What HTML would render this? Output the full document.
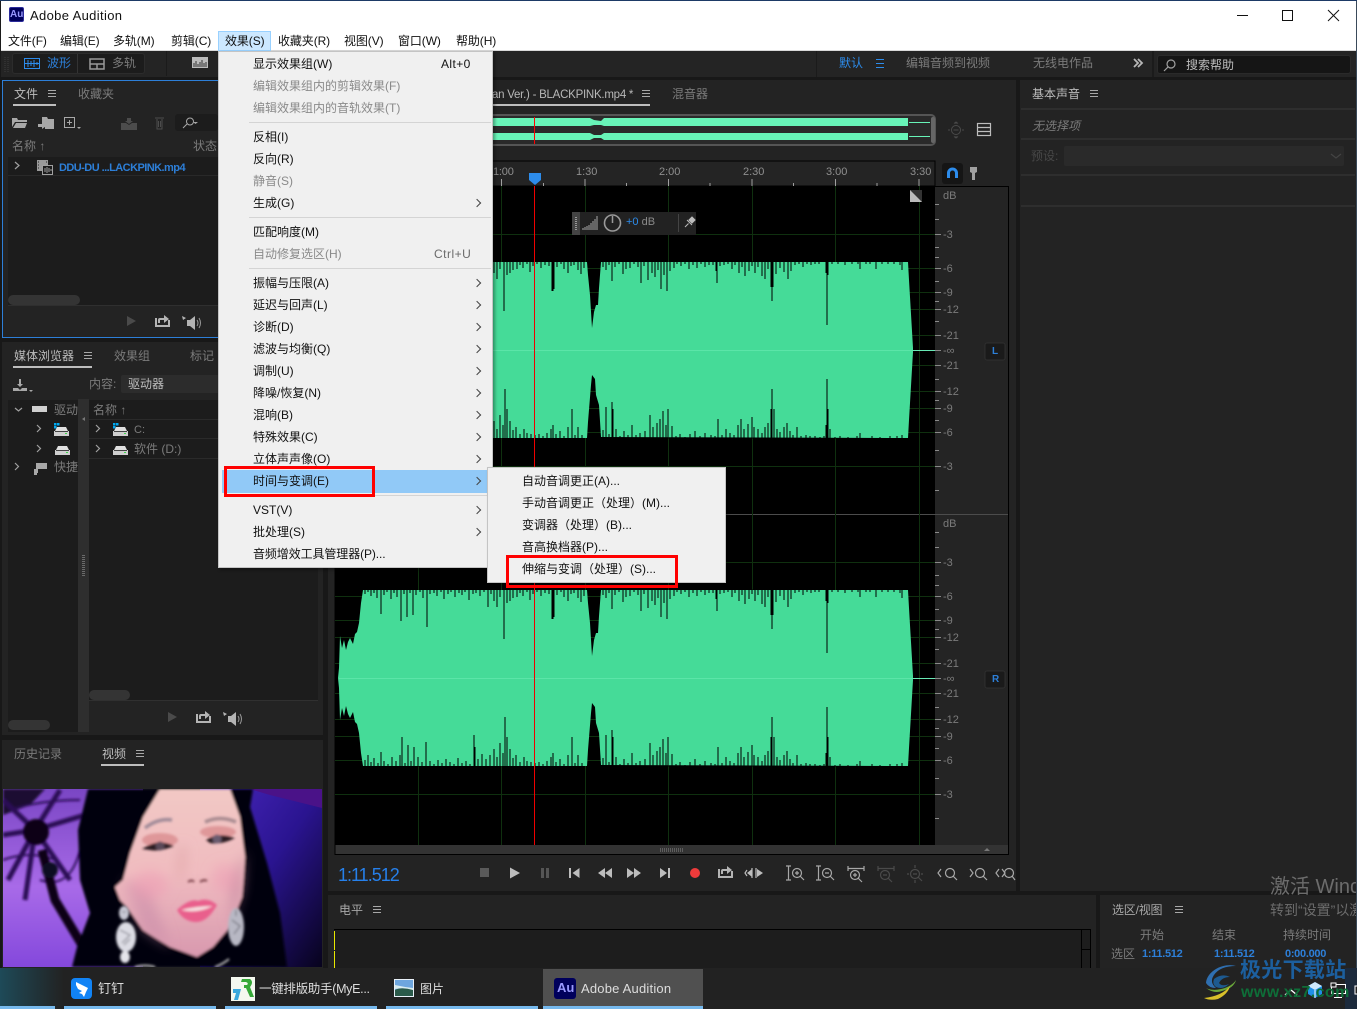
<!DOCTYPE html>
<html lang="zh"><head><meta charset="utf-8"><title>Adobe Audition</title>
<style>
html,body{margin:0;padding:0;width:1357px;height:1009px;overflow:hidden;background:#1a1a1a}
body{position:relative;font-family:"Liberation Sans","Noto Sans CJK SC",sans-serif;font-size:12px}
.b,.t{position:absolute}
.t{white-space:nowrap;line-height:16px;color:#7b7b7b}
.l{color:#bdbdbd}.w{color:#111}.bl{color:#2d7fd8}
svg{position:absolute;left:0;top:0}
.m{position:absolute;background:#f0f0f0;border:1px solid #c4c4c4;box-shadow:2px 2px 3px rgba(0,0,0,.35)}
.m .t{color:#111}.m .d{color:#8a8a8a}
.s{position:absolute;height:1px;background:#d4d4d4}
.a{position:absolute;width:5px;height:5px;border-top:1px solid #444;border-right:1px solid #444;transform:rotate(45deg)}
</style></head><body>

<!-- window chrome -->
<div class="b" style="left:0;top:0;width:1357px;height:1px;background:#1d3a66"></div>
<div class="b" style="left:1px;top:1px;width:1355px;height:50px;background:#fff"></div>
<div class="b" style="left:0;top:51px;width:1357px;height:917px;background:#181818"></div>
<div class="b" style="left:1356px;top:1px;width:1px;height:967px;background:#3a4a5a"></div>

<!-- toolbar -->
<div class="b" style="left:1px;top:51px;width:1355px;height:26px;background:#242424"></div>
<div class="b" style="left:1px;top:50px;width:1355px;height:1px;background:#d9d9d9"></div>
<div class="b" style="left:12px;top:53px;width:133px;height:21px;background:#1c1c1c;border-radius:3px;border:1px solid #2c2c2c;box-sizing:border-box"></div>
<div class="b" style="left:77px;top:54px;width:1px;height:19px;background:#333"></div>
<div class="b" style="left:166px;top:51px;width:1px;height:25px;background:#1b1b1b"></div>
<div class="b" style="left:816px;top:51px;width:1px;height:26px;background:#1b1b1b"></div>
<div class="b" style="left:1152px;top:51px;width:2px;height:26px;background:#1b1b1b"></div>
<div class="b" style="left:1157px;top:55px;width:194px;height:19px;background:#151515;border:1px solid #2a2a2a;border-radius:3px;box-sizing:border-box"></div>

<!-- left panels -->
<div class="b" style="left:2px;top:80px;width:321px;height:258px;background:#232323;border:1px solid #2d7fd8;box-sizing:border-box"></div>
<div class="b" style="left:8px;top:157px;width:310px;height:148px;background:#1c1c1c"></div>
<div class="b" style="left:8px;top:175px;width:310px;height:1px;background:#292929"></div>
<div class="b" style="left:8px;top:305px;width:310px;height:1px;background:#2f2f2f"></div>
<div class="b" style="left:8px;top:295px;width:72px;height:10px;border-radius:5px;background:#343434"></div>
<div class="b" style="left:2px;top:342px;width:321px;height:393px;background:#232323"></div>
<div class="b" style="left:8px;top:400px;width:70px;height:332px;background:#1c1c1c"></div>
<div class="b" style="left:78px;top:399px;width:11px;height:333px;background:#2e2e2e"></div>
<div class="b" style="left:89px;top:400px;width:229px;height:300px;background:#1c1c1c"></div>
<div class="b" style="left:89px;top:419px;width:229px;height:1px;background:#2a2a2a"></div>
<div class="b" style="left:89px;top:438px;width:229px;height:1px;background:#2a2a2a"></div>
<div class="b" style="left:89px;top:458px;width:229px;height:1px;background:#2a2a2a"></div>
<div class="b" style="left:89px;top:700px;width:229px;height:1px;background:#303030"></div>
<div class="b" style="left:89px;top:690px;width:41px;height:10px;border-radius:5px;background:#343434"></div>
<div class="b" style="left:8px;top:720px;width:42px;height:10px;border-radius:5px;background:#343434"></div>
<div class="b" style="left:121px;top:375px;width:100px;height:18px;background:#2c2c2c;border-radius:2px"></div>
<div class="b" style="left:2px;top:740px;width:321px;height:228px;background:#232323"></div>

<!-- main panel -->
<div class="b" style="left:328px;top:80px;width:688px;height:811px;background:#232323"></div>
<div class="b" style="left:1020px;top:80px;width:336px;height:811px;background:#232323"></div>
<div class="b" style="left:1021px;top:108px;width:334px;height:2px;background:#2e2e2e"></div>
<div class="b" style="left:1021px;top:138px;width:334px;height:2px;background:#2e2e2e"></div>
<div class="b" style="left:1021px;top:174px;width:334px;height:2px;background:#2e2e2e"></div>
<div class="b" style="left:1021px;top:205px;width:334px;height:2px;background:#2e2e2e"></div>
<div class="b" style="left:1064px;top:146px;width:280px;height:20px;background:#2a2a2a;border-radius:2px"></div>
<div class="b" style="left:328px;top:895px;width:768px;height:73px;background:#232323"></div>
<div class="b" style="left:1100px;top:895px;width:256px;height:73px;background:#232323"></div>
<div class="b" style="left:334px;top:929px;width:756px;height:39px;background:#1d1d1d;border-top:1px solid #000;box-sizing:border-box"></div>

<svg width="1357" height="1009" viewBox="0 0 1357 1009">
<defs>
<path id="sp" stroke="#000" stroke-width="1" fill="none" d="M365 -89v5M368 -89v3M371 -89v7M374 -89v4M377 -89v9M381 -89v25M384 -89v6M387 -89v3M391 -89v10M394 -89v4M397 -89v8M401 -89v32M404 -89v5M407 -89v28M410 -89v4M413 -89v26M416 -89v6M420 -89v3M423 -89v9M427 -89v38M430 -89v5M434 -89v4M437 -89v7M441 -89v3M444 -89v10M448 -89v5M451 -89v3M455 -89v8M459 -89v4M462 -89v6M465 -89v3M469 -89v11M473 -89v5M476 -89v4M480 -89v7M484 -89v3M488 -89v18M491 -89v5M494 -89v12M497 -89v18M500 -89v8M504 -89v50M507 -89v14M510 -89v12M513 -89v9M517 -89v8M520 -89v4M523 -89v7M527 -89v3M530 -89v11M533 -89v5M537 -89v3M541 -89v7M545 -89v4M549 -89v5M552 -89v30M553 -89v30M554 -89v28M557 -89v6M561 -89v3M564 -89v8M568 -89v12M571 -89v5M574 -89v4M578 -89v9M581 -89v13M584 -89v7M603 -89v6M606 -89v9M609 -89v4M612 -89v20M615 -89v6M619 -89v3M623 -89v13M626 -89v8M630 -89v7M634 -89v3M638 -89v6M641 -89v22M644 -89v5M648 -89v19M652 -89v12M655 -89v16M658 -89v9M661 -89v28M664 -89v14M667 -89v30M670 -89v10M674 -89v7M677 -89v3M681 -89v5M685 -89v3M689 -89v8M693 -89v4M697 -89v7M701 -89v3M705 -89v6M709 -89v4M713 -89v4M716 -89v10M717 -89v22M720 -89v5M724 -89v4M728 -89v3M732 -89v8M735 -89v4M739 -89v12M742 -89v6M745 -89v15M749 -89v10M752 -89v5M755 -89v12M758 -89v6M762 -89v15M765 -89v18M768 -89v8M771 -89v26M772 -89v40M773 -89v26M776 -89v13M780 -89v7M784 -89v11M788 -89v18M791 -89v10M795 -89v4M799 -89v3M803 -89v6M807 -89v3M811 -89v4M815 -89v3M819 -89v3M826 -89v12M827 -89v64M828 -89v14M832 -89v3M838 -89v3M845 -89v4M852 -89v3M858 -89v3M860 -89v8M866 -89v3M870 -89v3M876 -89v8M882 -89v3M888 -89v3M894 -89v3M900 -89v4M902 -89v9"/>
<path id="sb" stroke="#000" stroke-width="1" fill="none" d="M365 89v-7M368 89v-12M371 89v-5M374 89v-9M378 89v-4M381 89v-15M384 89v-6M388 89v-3M392 89v-10M396 89v-6M400 89v-12M402 89v-30M405 89v-4M408 89v-22M411 89v-6M414 89v-20M418 89v-10M422 89v-5M426 89v-25M430 89v-6M434 89v-3M438 89v-7M442 89v-4M446 89v-8M450 89v-5M454 89v-3M458 89v-9M462 89v-4M466 89v-6M470 89v-3M474 89v-32M475 89v-20M478 89v-8M482 89v-13M486 89v-8M490 89v-12M494 89v-18M497 89v-10M500 89v-24M503 89v-14M505 89v-50M507 89v-30M510 89v-18M513 89v-9M516 89v-12M520 89v-5M524 89v-10M527 89v-6M531 89v-5M535 89v-4M539 89v-5M543 89v-3M547 89v-6M551 89v-10M553 89v-14M556 89v-5M560 89v-8M564 89v-3M568 89v-12M572 89v-30M575 89v-4M578 89v-12M582 89v-4M603 89v-9M606 89v-32M609 89v-5M612 89v-37M613 89v-30M616 89v-10M620 89v-3M624 89v-8M628 89v-4M632 89v-14M636 89v-4M640 89v-6M645 89v-8M650 89v-24M653 89v-12M657 89v-16M660 89v-20M663 89v-28M666 89v-14M668 89v-30M672 89v-13M676 89v-3M680 89v-5M685 89v-2M690 89v-5M695 89v-8M700 89v-3M705 89v-6M711 89v-4M715 89v-3M718 89v-20M722 89v-4M726 89v-10M730 89v-6M734 89v-4M738 89v-14M741 89v-20M744 89v-10M748 89v-15M752 89v-22M754 89v-12M758 89v-10M762 89v-6M765 89v-12M768 89v-16M771 89v-30M772 89v-50M774 89v-30M777 89v-10M780 89v-7M784 89v-12M787 89v-16M790 89v-8M793 89v-4M797 89v-12M801 89v-3M806 89v-4M810 89v-3M815 89v-3M820 89v-2M824 89v-3M826 89v-14M827 89v-60M828 89v-30M830 89v-10M835 89v-2M840 89v-3M848 89v-2M857 89v-3M860 89v-6M872 89v-3M880 89v-2M890 89v-3M897 89v-3M902 89v-4"/>
<g id="wv">
<path fill="#45db98" d="M338 0L339 -10L340 -42L342 -30L344 -38L346 -28L348 -36L350 -40L353 -34L355 -44L357 -46L359 -55L361 -75L363 -88L587 -88L588 -75L590 -55L592 -22L594 -38L596 -45L598 -45L599 -62L601 -88L908 -88L909 -70L911 -36L913 -2L913 2L911 36L909 70L908 88L601 87L599 55L596 45L595 29L592 25L591 35L588 72L587 88L363 88L361 75L359 55L357 46L355 44L353 34L350 40L348 36L346 28L344 38L342 30L340 42L339 10Z"/>
<use href="#sp"/><use href="#sb"/>
<path stroke="#5be5a8" stroke-width="1" d="M339 .5H913"/>
<path stroke="#68e8b4" stroke-width="1" d="M913 .5H935"/>
</g>
<g id="gr" stroke="#0f300f" stroke-width="1">
<path d="M335 234.500H935M335 268.500H935M335 292.500H935M335 309.500H935M335 335.500H935M335 365.500H935M335 391.500H935M335 408.500H935M335 432.500H935M335 466.500H935"/>
</g>
<symbol id="i-menu" viewBox="0 0 8 7"><path d="M0 .5H8M0 3.500H8M0 6.500H8" stroke="#a8a8a8" stroke-width="1"/></symbol>
<g id="sk"><path d="M0 -1h3l5 -4v14l-5 -4h-3z" fill="#b4b4b4"/><path d="M-5 -5l4 2l-3 2z" fill="#b4b4b4"/><path d="M10 -1q2 3 0 6M12 -3q3 5 0 10" stroke="#9a9a9a" fill="none"/></g>
<g id="ex"><path d="M1 4v8h13V6" fill="none" stroke="#b4b4b4" stroke-width="2"/><path d="M3 9v-3q0 -2 2 -2h4v-3l5 4l-5 4v-3h-4v3z" fill="#b4b4b4"/></g>
<g id="dr"><path d="M3 3h9l2 4H1z" fill="#e0e0e0"/><rect x="0" y="7" width="15" height="5" fill="#cfcfcf"/><rect x="1" y="7" width="13" height="1" fill="#444"/><rect x="11" y="9" width="2" height="1" fill="#3fd44b"/></g>
<linearGradient id="pg" x1="0" y1="0" x2="0" y2="1"><stop offset="0" stop-color="#f2c8c4"/><stop offset=".5" stop-color="#f0bcc0"/><stop offset="1" stop-color="#d898ae"/></linearGradient>
</defs>

<!-- tab underlines -->
<g fill="#bdbdbd">
<rect x="13" y="104" width="43" height="2"/><rect x="13" y="366" width="79" height="2"/><rect x="101" y="764" width="43" height="2"/><rect x="493" y="104" width="157" height="2"/>
</g>
<use href="#i-menu" x="48" y="90" width="8" height="7"/>
<use href="#i-menu" x="84" y="352" width="8" height="7"/>
<use href="#i-menu" x="136" y="750" width="8" height="7"/>
<use href="#i-menu" x="642" y="90" width="8" height="7"/>
<use href="#i-menu" x="1090" y="90" width="8" height="7"/>
<use href="#i-menu" x="373" y="906" width="8" height="7"/>
<use href="#i-menu" x="1175" y="906" width="8" height="7"/>
<rect x="876" y="59" width="8" height="1" fill="#2d8ceb"/><rect x="876" y="63" width="8" height="1" fill="#2d8ceb"/><rect x="876" y="67" width="8" height="1" fill="#2d8ceb"/>

<!-- toolbar icons -->
<g fill="none" stroke="#2d8ceb" stroke-width="1"><rect x="24.500" y="58.500" width="15" height="10"/><path d="M28 60v7M31 61v5M34 60v7M37 62v3M24 63.500h16"/></g>
<g fill="none" stroke="#9a9a9a" stroke-width="1.500"><rect x="90" y="59" width="14" height="10"/><path d="M90 64h14M97 64v5"/></g>
<rect x="192" y="57" width="16" height="11" fill="#bcbcbc"/><path d="M194 67v-4M196 67v-6M198 67v-3M200 67v-5M202 67v-7M204 67v-4M206 67v-5" stroke="#333"/>
<path d="M5 57v16M8 57v16" stroke="#3b3b3b" stroke-dasharray="1 1"/>
<path d="M1138 60l4 4l-4 4M1134 60l4 4l-4 4" transform="translate(0,-1)" fill="none" stroke="#b8b8b8" stroke-width="1.800"/>
<g transform="translate(1164,59)" fill="none" stroke="#a0a0a0" stroke-width="1.200"><circle cx="7" cy="5" r="4"/><path d="M4 8L0 12"/></g>

<!-- files icons -->
<g fill="#a8a8a8"><path d="M12 118h5l1 2h9v2H15l-3 5zM13 128l3 -5h11l-2 5z"/><path d="M42 117h5l1 2h6v10H45v-3h-3zM38 124h4v-2l5 3.500l-5 3.500v-2h-4z"/></g>
<g fill="none" stroke="#a8a8a8"><rect x="64.500" y="117.500" width="10" height="10"/><path d="M67 122.500h5M69.500 120v5"/></g><path d="M77 127h4l-2 2z" fill="#a8a8a8"/>
<path d="M121 123h5l3 2l3 -2h5v7h-16zM127 118h4v3h2l-4 3l-4 -3h2z" fill="#4c4c4c"/><path d="M155 118h9M157 119v10h5v-10M158.500 121v6M160.500 121v6" stroke="#4c4c4c" fill="none"/>
<rect x="175" y="114" width="43" height="17" rx="3" fill="#1c1c1c"/>
<g transform="translate(183,117)" fill="none" stroke="#a8a8a8"><circle cx="7" cy="4.500" r="3.500"/><path d="M4 7L0 11"/></g><path d="M193 122h5l-2.500 2z" fill="#a8a8a8"/>
<path d="M15 162l4 3.500l-4 3.500" fill="none" stroke="#a0a0a0" stroke-width="1.200"/>
<g><rect x="37" y="160" width="11" height="11" fill="#9a9a9a"/><path d="M38 162h1M38 165h1M38 168h1M46 162h1" stroke="#222"/><rect x="42.500" y="165.500" width="10" height="9" fill="#1c1c1c" stroke="#a0a0a0"/><path d="M45 168v4M47 167v6M49 168v4M51 169v2" stroke="#a0a0a0"/></g>
<path d="M127 316l9 5l-9 5z" fill="#4a4a4a"/>
<use href="#ex" x="155" y="314"/><use href="#sk" x="187" y="321"/>
<path d="M168 712l9 5l-9 5z" fill="#4a4a4a"/>
<use href="#ex" x="196" y="710"/><use href="#sk" x="228" y="717"/>
<path d="M13 388h5l2 2l2 -2h5v3H13zM17 384l3 3l3 -3h-2v-5h-2v5z" fill="#a8a8a8"/><path d="M29 390h4l-2 2z" fill="#a8a8a8"/>

<!-- tree -->
<path d="M15 408l3.500 3l3.500 -3" fill="none" stroke="#a0a0a0" stroke-width="1.200"/>
<path d="M37 425l3.500 3.500l-3.500 3.500M37 445l3.500 3.500l-3.500 3.500M15 463l3.500 3.500l-3.500 3.500M96 425l3.500 3.500l-3.500 3.500M96 445l3.500 3.500l-3.500 3.500" fill="none" stroke="#a0a0a0" stroke-width="1.200"/>
<rect x="32" y="406" width="15" height="6" fill="#cfcfcf"/>
<use href="#dr" x="54" y="424"/><use href="#dr" x="113" y="424"/>
<use href="#dr" x="55" y="443"/><use href="#dr" x="113" y="443"/>
<g fill="#00a8f0"><rect x="54" y="423" width="2.500" height="2.500"/><rect x="57" y="423" width="2.500" height="2.500"/><rect x="54" y="426" width="2.500" height="2.500"/><rect x="113" y="423" width="2.500" height="2.500"/><rect x="116" y="423" width="2.500" height="2.500"/><rect x="113" y="426" width="2.500" height="2.500"/></g>
<path d="M36 463h11v6H38v4h-1v2h-3v-6h2z" fill="#a8a8a8"/>
<path d="M85 417l-3 2l3 2z" fill="#777"/>
<path d="M83.500 555v22" stroke="#6a6a6a" stroke-dasharray="1 1" stroke-width="3"/>

<!-- main -->
<rect x="335" y="115" width="600" height="30" rx="4" fill="#2a2a2a" stroke="#555" stroke-width="2"/>
<g fill="#68f4b8"><path d="M493 118h97l4 2l7 1l3 -3h304v8h-304l-3 -1h-7l-4 1h-97z"/><path d="M493 133h97l4 2h7l3 -2h304v7h-304l-3 -2h-7l-4 2h-97z"/><rect x="909" y="122" width="21" height="1"/><rect x="909" y="136" width="21" height="1"/></g>
<rect x="931" y="117" width="4" height="26" rx="2" fill="#666"/>
<path d="M534.500 117v27" stroke="#f00"/>
<g transform="translate(948,122)" fill="none" stroke="#4a4a4a"><circle cx="8" cy="8" r="4.500"/><path d="M5.500 8h5M8 0v2M8 14v2M0 8h2M14 8h2M6 1.500l2 -1.500l2 1.500M6 14.500l2 1.500l2 -1.500"/></g>
<g fill="none" stroke="#bdbdbd" stroke-width="1.200"><rect x="977.500" y="123.500" width="13" height="12"/><path d="M978 127.500h12M978 131.500h12"/></g>

<rect x="334" y="161" width="601" height="25" fill="#242424" stroke="#000"/>
<rect x="335" y="186" width="600" height="659" fill="#000"/>
<rect x="935" y="186" width="73" height="659" fill="#242424"/>
<path d="M934.500 186v669M1008.500 186v669M935 186.500h73M335 514.500h673" stroke="#000"/>
<path d="M335 514.500h673" stroke="#4c4c4c"/>
<rect x="335" y="845" width="673" height="10" fill="#333"/><path d="M335 854.500h674M335 186v669" stroke="#000"/>
<path d="M660 849h24M660 851h24" stroke="#888" stroke-dasharray="1 1"/>
<path d="M984 851l3 -3l3 3z" fill="#777"/>
<rect x="942" y="163" width="21" height="21" rx="3" fill="#151515"/>
<path d="M947 178v-5a5.500 5.500 0 0 1 11 0v5h-3v-5a2.500 2.500 0 0 0 -5 0v5z" fill="#2d8ceb"/>
<path d="M970 167h7v5l-2 1v7h-3v-7l-2 -1z" fill="#a0a0a0"/>

<!-- ruler ticks -->
<path stroke="#a0a0a0" d="M501.500 179v7M585 179v7M668.500 179v7M752 179v7M835.500 179v7M919 179v7M543.500 183v3M626.500 183v3M710 183v3M793.500 183v3M877 183v3"/>
<g stroke="#0f300f"><path d="M418.500 186V845M501.500 186V845M585.500 186V845M668.500 186V845M752.500 186V845M835.500 186V845M919.500 186V845"/></g>
<use href="#gr"/><use href="#gr" y="328"/>
<use href="#wv" transform="translate(0,350)"/>
<use href="#wv" transform="translate(0,678)"/>
<path d="M534.500 186V845" stroke="#e00"/>
<path d="M529 173h12v7l-6 5l-6 -5z" fill="#2d8ceb"/>
<rect x="910" y="190" width="12" height="12" fill="#bbb"/><path d="M910 190h12v12z" fill="#333"/>

<rect x="572" y="212" width="124" height="23" fill="#222"/>
<rect x="572" y="212" width="8" height="23" fill="#444"/><path d="M576 217v14" stroke="#999" stroke-dasharray="1 1" stroke-width="2"/>
<path d="M583 228v2M585 227v3M587 226v4M589 225v5M591 223v7M593 221v9M595 219v11M597 216v14" stroke="#a8a8a8"/>
<circle cx="612.500" cy="223" r="8" fill="none" stroke="#9a9a9a" stroke-width="1.600"/><path d="M612.500 216v7" stroke="#9a9a9a" stroke-width="1.500"/>
<path d="M678.500 214v18" stroke="#444"/>
<path d="M685 227l3.500 -3.500M687 220l5 5M689 220l3 -3l3 3l-3 3z" fill="#bbb" stroke="#bbb"/>

<!-- dB ticks -->
<g stroke="#8a8a8a"><path d="M935 204.500h4M935 219.500h4M935 234.500h6M935 247.500h4M935 257.500h4M935 268.500h6M935 281.500h4M935 292.500h6M935 301.500h4M935 309.500h6M935 321.500h4M935 335.500h6M935 350.500h6M935 365.500h6M935 379.500h4M935 391.500h6M935 400.500h4M935 408.500h6M935 420.500h4M935 432.500h6M935 450.500h4M935 466.500h6M935 490.500h4"/><path d="M935 532.500h4M935 547.500h4M935 562.500h6M935 575.500h4M935 585.500h4M935 596.500h6M935 609.500h4M935 620.500h6M935 629.500h4M935 637.500h6M935 649.500h4M935 663.500h6M935 678.500h6M935 693.500h6M935 707.500h4M935 719.500h6M935 728.500h4M935 736.500h6M935 748.500h4M935 760.500h6M935 778.500h4M935 794.500h6M935 818.500h4"/></g>
<rect x="985" y="343" width="20" height="17" rx="2" fill="#1a1a1a" stroke="#2f2f2f"/>
<rect x="985" y="671" width="20" height="17" rx="2" fill="#1a1a1a" stroke="#2f2f2f"/>

<!-- transport -->
<rect x="480" y="868" width="9" height="9" fill="#5a5a5a"/>
<path d="M510 867.500l10 5.500l-10 5.500z" fill="#bdbdbd"/>
<path d="M541 868h3v10h-3zM546 868h3v10h-3z" fill="#555"/>
<path d="M569 868h2v10h-2zM579.500 868v10l-7 -5z" fill="#bdbdbd"/>
<path d="M605 868v10l-7 -5zM612 868v10l-7 -5z" fill="#bdbdbd"/>
<path d="M627 868v10l7 -5zM634 868v10l7 -5z" fill="#bdbdbd"/>
<path d="M660 868v10l7 -5zM668 868h2v10h-2z" fill="#bdbdbd"/>
<circle cx="695" cy="873" r="5" fill="#ee3b3b"/>
<use href="#ex" x="718" y="865"/>
<path d="M747 870l-2 3l2 3M752 868v10M756 868v10" fill="none" stroke="#bdbdbd" stroke-width="1.200"/><path d="M757 869l6 4l-6 4zM752 869l-5 4l5 4z" fill="#bdbdbd"/>
<g fill="none" stroke="#a8a8a8" stroke-width="1.200"><path d="M786 866h5M786 880h5M788.500 866v14"/><circle cx="797" cy="873" r="4.500"/><path d="M800 876l4 4M795 873h4M797 871v4"/><path d="M816 866h5M816 880h5M818.500 866v14"/><circle cx="827" cy="873" r="4.500"/><path d="M830 876l4 4M825 873h4"/><path d="M848 866v5M864 866v5M848 868.500h16"/><circle cx="855" cy="875" r="4.500"/><path d="M858 878l4 4M853 875h4M855 873v4"/></g>
<g fill="none" stroke="#4a4a4a" stroke-width="1.200"><path d="M878 866v5M894 866v5M878 868.500h16"/><circle cx="885" cy="875" r="4.500"/><path d="M888 878l4 4M883 875h4"/><circle cx="915" cy="874" r="4.500"/><path d="M918 877l4 4M913 874h4M915 865v3M915 880v3M907 874h2M921 874h2"/></g>
<g fill="none" stroke="#a8a8a8" stroke-width="1.200"><path d="M941 869l-3 4l3 4"/><circle cx="950" cy="873" r="4.500"/><path d="M953 876l4 4"/><path d="M970 869l3 4l-3 4"/><circle cx="980" cy="873" r="4.500"/><path d="M983 876l4 4"/><path d="M999 869l-3 4l3 4M1002 869l3 4l-3 4"/><circle cx="1009" cy="873" r="4.500"/><path d="M1012 876l3 4"/></g>

<!-- levels -->
<path d="M334.500 931v19M334.500 951v17" stroke="#e8e800"/>
<path d="M1081.500 929v39M1090.500 929v39M1081 949.500h10" stroke="#000"/>

<path d="M1331 154l5 4l5 -4" fill="none" stroke="#444" stroke-width="1.200"/>
</svg>

<!-- video -->
<svg width="319" height="178" viewBox="3 789 319 178" style="left:3px;top:789px">
<defs>
<filter id="bl" x="-5%" y="-5%" width="110%" height="110%"><feGaussianBlur stdDeviation="1.300"/></filter>
<filter id="bl2" x="-30%" y="-30%" width="160%" height="160%"><feGaussianBlur stdDeviation="6"/></filter>
<linearGradient id="lb" x1="0" y1="0" x2="0" y2="1"><stop offset="0" stop-color="#7a46c4"/><stop offset=".55" stop-color="#a86ae8"/><stop offset="1" stop-color="#8448dc"/></linearGradient>
<linearGradient id="rb" x1="0" y1="0" x2="1" y2="1"><stop offset="0" stop-color="#4a28c0"/><stop offset=".5" stop-color="#2a1490"/><stop offset="1" stop-color="#07031c"/></linearGradient>
</defs>
<rect x="3" y="789" width="140" height="178" fill="url(#lb)"/>
<rect x="200" y="789" width="122" height="178" fill="url(#rb)"/>
<path d="M250 789H322V808L270 795z" fill="#4a1288"/>
<g filter="url(#bl)">
<path d="M3 789H45L30 805L3 815z" fill="#1a0a30"/>
<g stroke="#2a0f55" fill="none"><path d="M35 830L3 800M35 830L60 790M35 830L3 835M35 830L85 815M35 830L8 880M35 830L25 900M35 830L70 880" stroke-width="5"/><path d="M3 860Q30 850 55 860M10 810Q40 800 80 800M40 880Q70 890 80 850" stroke-width="2"/></g>
<circle cx="36" cy="832" r="13" fill="#0c0418"/>
<path d="M42 850L55 900L82 945" stroke="#0c0418" stroke-width="9" fill="none"/>
<circle cx="50" cy="870" r="8" fill="#100a20"/>
<path d="M88 789L78 830L80 880L90 913L77 947L72 967H287L280 913L267 863L250 807L253 789z" fill="#05030a"/>
<path d="M160 789L143 817L130 853L123 880L115 887L120 900L127 907L143 930L170 947L197 957L213 947L230 927L242 897L245 857L240 817L230 789z" fill="url(#pg)"/>
</g>
<g filter="url(#bl2)">
<path d="M123 880L143 930L170 947L150 890z" fill="#c88aa8" opacity=".55"/>
<path d="M230 927L242 890L245 850L232 880z" fill="#b87a98" opacity=".6"/>
<ellipse cx="150" cy="885" rx="18" ry="14" fill="#ee9cb4" opacity=".55"/>
<ellipse cx="225" cy="878" rx="13" ry="14" fill="#ee9cb4" opacity=".5"/>
<path d="M183 846L180 878" stroke="#d89a9c" stroke-width="6" fill="none" opacity=".6"/>
</g>
<g filter="url(#bl)">
<path d="M145 828Q158 818 172 820" stroke="#a08a98" stroke-width="3.500" fill="none"/>
<path d="M205 822Q220 815 236 822" stroke="#a88a90" stroke-width="3.500" fill="none"/>
<ellipse cx="160" cy="840" rx="18" ry="7" fill="#d88a8c" opacity=".75"/>
<ellipse cx="218" cy="832" rx="18" ry="6" fill="#d88a8c" opacity=".75"/>
<path d="M142 849Q158 838 174 846Q160 852 150 850z" fill="#2a1a20"/>
<circle cx="160" cy="846" r="4.500" fill="#5a4a58"/>
<path d="M206 840Q218 832 235 838Q222 845 210 843z" fill="#2a1a20"/>
<circle cx="217" cy="839" r="4.500" fill="#6a5c70"/>
<path d="M188 882q4 -3 6 0M200 882q4 -3 7 -1" stroke="#7a4048" stroke-width="2" fill="none"/>
<path d="M177 910Q190 898 198 901Q208 897 217 905Q207 923 195 922Q183 921 177 910z" fill="#e95e8c"/>
<path d="M181 910Q197 906 213 906Q197 914 181 910z" fill="#f6dfe0"/>
<ellipse cx="124" cy="913" rx="5" ry="7" fill="#c8c8d4"/>
<ellipse cx="126" cy="937" rx="10" ry="15" fill="#dcdce4"/>
<ellipse cx="125" cy="957" rx="5" ry="6" fill="#e4e4ea"/>
<path d="M120 930l10 5l-8 8M124 945l6 -6M122 912h4" stroke="#7a7a84" fill="none"/>
<ellipse cx="236" cy="927" rx="8" ry="19" fill="#b8b8c4"/><path d="M232 920l8 6l-6 8M236 910v6" stroke="#5a5a64" fill="none"/>
<path d="M135 967q10 -3 20 0M215 967q8 -3 14 -8" stroke="#bbb" stroke-width="2" fill="none"/>
</g>
</svg>

<!-- title + menu text -->
<div class="b" style="left:9px;top:7px;width:15px;height:15px;background:#00005b;border:1px solid #2a2a9a;border-radius:2px;box-sizing:border-box;color:#9999ff;font:bold 10px/13px 'Liberation Sans',sans-serif;text-align:center">Au</div>
<div class="t w" style="left:30px;top:8px;font-size:13px;letter-spacing:.35px">Adobe Audition</div>
<svg width="1357" height="30" viewBox="0 0 1357 30"><path d="M1237 15.500h11M1282.500 10.500h10v10h-10zM1328 10l11 11M1339 10l-11 11" stroke="#111" fill="none"/></svg>
<div class="b" style="left:218px;top:31px;width:53px;height:20px;background:#cce8ff;border:1px solid #99d1ff;box-sizing:border-box"></div>
<div class="t w" style="left:8px;top:33px;letter-spacing:-.1px">文件(F)</div>
<div class="t w" style="left:60px;top:33px;letter-spacing:-.1px">编辑(E)</div>
<div class="t w" style="left:113px;top:33px;letter-spacing:-.1px">多轨(M)</div>
<div class="t w" style="left:171px;top:33px;letter-spacing:-.1px">剪辑(C)</div>
<div class="t w" style="left:225px;top:33px;letter-spacing:-.1px">效果(S)</div>
<div class="t w" style="left:278px;top:33px;letter-spacing:-.1px">收藏夹(R)</div>
<div class="t w" style="left:344px;top:33px;letter-spacing:-.1px">视图(V)</div>
<div class="t w" style="left:398px;top:33px;letter-spacing:-.1px">窗口(W)</div>
<div class="t w" style="left:456px;top:33px;letter-spacing:-.1px">帮助(H)</div>

<div class="t bl" style="left:47px;top:55px">波形</div>
<div class="t" style="left:112px;top:55px">多轨</div>
<div class="t" style="left:839px;top:55px;color:#2d8ceb">默认</div>
<div class="t" style="left:906px;top:55px">编辑音频到视频</div>
<div class="t" style="left:1033px;top:55px">无线电作品</div>
<div class="t l" style="left:1186px;top:57px">搜索帮助</div>

<div class="t l" style="left:14px;top:86px">文件</div>
<div class="t" style="left:78px;top:86px">收藏夹</div>
<div class="t" style="left:12px;top:138px">名称 <b>↑</b></div>
<div class="t" style="left:193px;top:138px">状态</div>
<div class="t bl" style="left:59px;top:160px;font-size:11px;font-weight:bold;letter-spacing:-.55px">DDU-DU ...LACKPINK.mp4</div>
<div class="t l" style="left:14px;top:348px">媒体浏览器</div>
<div class="t" style="left:114px;top:348px">效果组</div>
<div class="t" style="left:190px;top:348px">标记</div>
<div class="t" style="left:89px;top:376px">内容:</div>
<div class="t l" style="left:128px;top:376px">驱动器</div>
<div class="t" style="left:54px;top:402px">驱动</div>
<div class="t" style="left:54px;top:459px">快捷</div>
<div class="t" style="left:93px;top:402px">名称 <b>↑</b></div>
<div class="t" style="left:134px;top:422px;font-size:11px">C:</div>
<div class="t" style="left:134px;top:441px">软件 (D:)</div>
<div class="t" style="left:14px;top:746px">历史记录</div>
<div class="t l" style="left:102px;top:746px">视频</div>

<div class="t l" style="left:492px;top:87px;font-size:11.500px;letter-spacing:-.25px;color:#b8b8b8">an Ver.) - BLACKPINK.mp4 *</div>
<div class="t" style="left:672px;top:86px">混音器</div>
<div class="t" style="left:493px;top:164px;font-size:11px;letter-spacing:-.2px;color:#8f8f8f">1:00</div>
<div class="t" style="left:576px;top:164px;font-size:11px;color:#8f8f8f">1:30</div>
<div class="t" style="left:659px;top:164px;font-size:11px;color:#8f8f8f">2:00</div>
<div class="t" style="left:743px;top:164px;font-size:11px;color:#8f8f8f">2:30</div>
<div class="t" style="left:826px;top:164px;font-size:11px;color:#8f8f8f">3:00</div>
<div class="t" style="left:910px;top:164px;font-size:11px;color:#8f8f8f">3:30</div>
<div class="t" style="left:626px;top:214px;font-size:11px;color:#8a8a8a"><span style="color:#2d8ceb">+0</span> dB</div>

<!-- dB labels -->
<div class="t" style="left:943px;top:188px;font-size:11px">dB</div>
<div class="t" style="left:943px;top:227px;font-size:11px">-3</div>
<div class="t" style="left:943px;top:261px;font-size:11px">-6</div>
<div class="t" style="left:943px;top:285px;font-size:11px">-9</div>
<div class="t" style="left:943px;top:302px;font-size:11px">-12</div>
<div class="t" style="left:943px;top:328px;font-size:11px">-21</div>
<div class="t" style="left:943px;top:343px;font-size:11px">-∞</div>
<div class="t" style="left:943px;top:358px;font-size:11px">-21</div>
<div class="t" style="left:943px;top:384px;font-size:11px">-12</div>
<div class="t" style="left:943px;top:401px;font-size:11px">-9</div>
<div class="t" style="left:943px;top:425px;font-size:11px">-6</div>
<div class="t" style="left:943px;top:459px;font-size:11px">-3</div>
<div class="t" style="left:943px;top:516px;font-size:11px">dB</div>
<div class="t" style="left:943px;top:555px;font-size:11px">-3</div>
<div class="t" style="left:943px;top:589px;font-size:11px">-6</div>
<div class="t" style="left:943px;top:613px;font-size:11px">-9</div>
<div class="t" style="left:943px;top:630px;font-size:11px">-12</div>
<div class="t" style="left:943px;top:656px;font-size:11px">-21</div>
<div class="t" style="left:943px;top:671px;font-size:11px">-∞</div>
<div class="t" style="left:943px;top:686px;font-size:11px">-21</div>
<div class="t" style="left:943px;top:712px;font-size:11px">-12</div>
<div class="t" style="left:943px;top:729px;font-size:11px">-9</div>
<div class="t" style="left:943px;top:753px;font-size:11px">-6</div>
<div class="t" style="left:943px;top:787px;font-size:11px">-3</div>
<div class="t bl" style="left:992px;top:344px;font-size:10px;font-weight:bold">L</div>
<div class="t bl" style="left:992px;top:672px;font-size:10px;font-weight:bold">R</div>

<div class="t l" style="left:1032px;top:86px">基本声音</div>
<div class="t" style="left:1032px;top:118px;font-style:italic">无选择项</div>
<div class="t" style="left:1031px;top:148px;color:#474747">预设:</div>

<div class="t bl" style="left:338px;top:866px;font-size:18px;line-height:18px;letter-spacing:-1px;color:#2680eb">1:11.512</div>
<div class="t l" style="left:339px;top:902px;color:#a8a8a8">电平</div>
<div class="t l" style="left:1112px;top:902px;color:#a8a8a8;letter-spacing:-.2px">选区/视图</div>
<div class="t" style="left:1140px;top:927px">开始</div>
<div class="t" style="left:1212px;top:927px">结束</div>
<div class="t" style="left:1283px;top:927px">持续时间</div>
<div class="t" style="left:1111px;top:946px">选区</div>
<div class="t bl" style="left:1142px;top:946px;font-size:11px;font-weight:bold;letter-spacing:-.3px">1:11.512</div>
<div class="t bl" style="left:1214px;top:946px;font-size:11px;font-weight:bold;letter-spacing:-.3px">1:11.512</div>
<div class="t bl" style="left:1285px;top:946px;font-size:11px;font-weight:bold;letter-spacing:-.3px">0:00.000</div>
<div class="t" style="left:1270px;top:875px;font-size:20px;line-height:24px;color:#6c6c6c;width:86px;overflow:hidden">激活 Windows</div>
<div class="t" style="left:1270px;top:901px;font-size:14px;line-height:18px;color:#6c6c6c;width:86px;overflow:hidden">转到“设置”以激活</div>

<!-- effects menu -->
<div class="m" style="left:218px;top:51px;width:273px;height:515px">
<div class="b" style="left:3px;top:418px;width:267px;height:23px;background:#91c9f7"></div>
<div class="s" style="left:30px;top:70px;width:242px"></div>
<div class="s" style="left:30px;top:165px;width:242px"></div>
<div class="s" style="left:30px;top:216px;width:242px"></div>
<div class="s" style="left:30px;top:443px;width:242px"></div>
<div class="t" style="left:34px;top:4px">显示效果组(W)</div><div class="t" style="left:222px;top:4px;letter-spacing:.4px">Alt+0</div>
<div class="t d" style="left:34px;top:26px">编辑效果组内的剪辑效果(F)</div>
<div class="t d" style="left:34px;top:48px">编辑效果组内的音轨效果(T)</div>
<div class="t" style="left:34px;top:77px">反相(I)</div>
<div class="t" style="left:34px;top:99px">反向(R)</div>
<div class="t d" style="left:34px;top:121px">静音(S)</div>
<div class="t" style="left:34px;top:143px">生成(G)</div><div class="a" style="left:255px;top:148px"></div>
<div class="t" style="left:34px;top:172px">匹配响度(M)</div>
<div class="t d" style="left:34px;top:194px">自动修复选区(H)</div><div class="t d" style="left:215px;top:194px;color:#6a6a6a;letter-spacing:.5px">Ctrl+U</div>
<div class="t" style="left:34px;top:223px">振幅与压限(A)</div><div class="a" style="left:255px;top:228px"></div>
<div class="t" style="left:34px;top:245px">延迟与回声(L)</div><div class="a" style="left:255px;top:250px"></div>
<div class="t" style="left:34px;top:267px">诊断(D)</div><div class="a" style="left:255px;top:272px"></div>
<div class="t" style="left:34px;top:289px">滤波与均衡(Q)</div><div class="a" style="left:255px;top:294px"></div>
<div class="t" style="left:34px;top:311px">调制(U)</div><div class="a" style="left:255px;top:316px"></div>
<div class="t" style="left:34px;top:333px">降噪/恢复(N)</div><div class="a" style="left:255px;top:338px"></div>
<div class="t" style="left:34px;top:355px">混响(B)</div><div class="a" style="left:255px;top:360px"></div>
<div class="t" style="left:34px;top:377px">特殊效果(C)</div><div class="a" style="left:255px;top:382px"></div>
<div class="t" style="left:34px;top:399px">立体声声像(O)</div><div class="a" style="left:255px;top:404px"></div>
<div class="t" style="left:34px;top:421px">时间与变调(E)</div><div class="a" style="left:255px;top:426px"></div>
<div class="t" style="left:34px;top:450px">VST(V)</div><div class="a" style="left:255px;top:455px"></div>
<div class="t" style="left:34px;top:472px">批处理(S)</div><div class="a" style="left:255px;top:477px"></div>
<div class="t" style="left:34px;top:494px;letter-spacing:-.1px">音频增效工具管理器(P)...</div>
</div>
<!-- submenu -->
<div class="m" style="left:487px;top:467px;width:237px;height:114px">
<div class="t" style="left:34px;top:5px">自动音调更正(A)...</div>
<div class="t" style="left:34px;top:27px">手动音调更正（处理）(M)...</div>
<div class="t" style="left:34px;top:49px">变调器（处理）(B)...</div>
<div class="t" style="left:34px;top:71px">音高换档器(P)...</div>
<div class="t" style="left:34px;top:93px">伸缩与变调（处理）(S)...</div>
</div>
<div class="b" style="left:224px;top:466px;width:151px;height:31px;border:3px solid #f00;box-sizing:border-box"></div>
<div class="b" style="left:506px;top:555px;width:172px;height:33px;border:3px solid #f00;box-sizing:border-box"></div>

<!-- taskbar -->
<div class="b" style="left:0;top:968px;width:1357px;height:41px;background:#222"></div>
<div class="b" style="left:0;top:968px;width:64px;height:41px;background:linear-gradient(90deg,#1e4a58,#222)"></div>
<div class="b" style="left:543px;top:969px;width:160px;height:40px;background:#505050"></div>
<div class="b" style="left:1345px;top:968px;width:12px;height:41px;background:#1c2a3c"></div>
<div class="b" style="left:0;top:1006px;width:55px;height:3px;background:#76b9ed"></div>
<div class="b" style="left:64px;top:1006px;width:152px;height:3px;background:#76b9ed"></div>
<div class="b" style="left:225px;top:1006px;width:152px;height:3px;background:#76b9ed"></div>
<div class="b" style="left:386px;top:1006px;width:152px;height:3px;background:#76b9ed"></div>
<div class="b" style="left:543px;top:1006px;width:160px;height:3px;background:#76b9ed"></div>
<svg width="1357" height="1009" viewBox="0 0 1357 1009">
<rect x="71" y="978" width="21" height="21" rx="4" fill="#1183f5"/>
<path d="M76 982Q82 985 88 988L86 992L84 997L82 994L79 993L82 991L78 989L76 985z" fill="#fff"/>
<rect x="231" y="977" width="24" height="24" fill="#f4f8ef"/>
<path d="M242 979h8q4 3 0 8l4 10h-4l-4 -9h-2v-3h3q2 -2 -1 -3h-5z" fill="#36a838"/><path d="M233 989h8l-3 11h-4l2 -7h-3z" fill="#3aa8dc"/>
<rect x="394" y="979" width="20" height="18" fill="#e8f0f8"/><rect x="395" y="980" width="18" height="16" fill="#6ea6de"/><path d="M395 990q8 -4 18 0v6h-18z" fill="#2a5a4a"/><path d="M395 985q9 2 18 3v2q-9 -3 -18 -1z" fill="#d8ecf0"/>
<rect x="554" y="978" width="22" height="21" rx="3" fill="#00005b"/>
<g><path d="M1206 983a20 14 -20 0 1 30 -17q-16 0 -22 9q-5 7 2 13q-7 0 -10 -5z" fill="#2f6fb0"/><path d="M1206 988a18 10 -15 0 0 30 -8q-2 8 -14 11q-8 3 -16 -3z" fill="#6aa83a"/><path d="M1204 998q18 -2 26 -12q-2 8 -12 13q-8 2 -14 -1z" fill="#d8c02a"/><path d="M1214 979q8 -6 16 -2q-8 0 -11 6q3 4 10 1q-6 6 -13 3q-4 -3 -2 -8z" fill="#1d5a90"/></g>
<path d="M1285 995l6 -5l6 5" fill="none" stroke="#fff" stroke-width="1.300"/>
<path d="M1315 982l7 4v8l-7 4l-7 -4v-8z" fill="#1f8fe8"/><path d="M1315 982l7 4l-7 4l-7 -4z" fill="#cfe9fb"/><path d="M1315 990v8" stroke="#fff"/>
<path d="M1331.500 984.500h14v9h-14zM1338 994v4M1334 997.500h8" fill="none" stroke="#fff"/><rect x="1331" y="983" width="5" height="4" fill="#222" stroke="#fff"/>
<rect x="1355" y="986" width="3" height="8" fill="#222" stroke="#fff"/>
</svg>
<div class="b" style="left:557px;top:980px;color:#9999ff;font:bold 13px/16px 'Liberation Sans',sans-serif">Au</div>
<div class="t" style="left:98px;top:981px;color:#ddd;font-size:13px">钉钉</div>
<div class="t" style="left:259px;top:981px;color:#ddd;font-size:12.500px;letter-spacing:-.3px">一键排版助手(MyE...</div>
<div class="t" style="left:420px;top:981px;color:#ddd">图片</div>
<div class="t" style="left:581px;top:981px;color:#ddd;font-size:13px;letter-spacing:.2px">Adobe Audition</div>
<div class="t" style="left:1240px;top:959px;font-size:21px;line-height:24px;font-weight:bold;color:#1c5f9e;letter-spacing:.3px">极光下载站</div>
<div class="t" style="left:1241px;top:984px;font-size:16px;line-height:18px;font-weight:bold;color:#0e6e38;letter-spacing:.4px">www.xz7.com</div>
</body></html>
